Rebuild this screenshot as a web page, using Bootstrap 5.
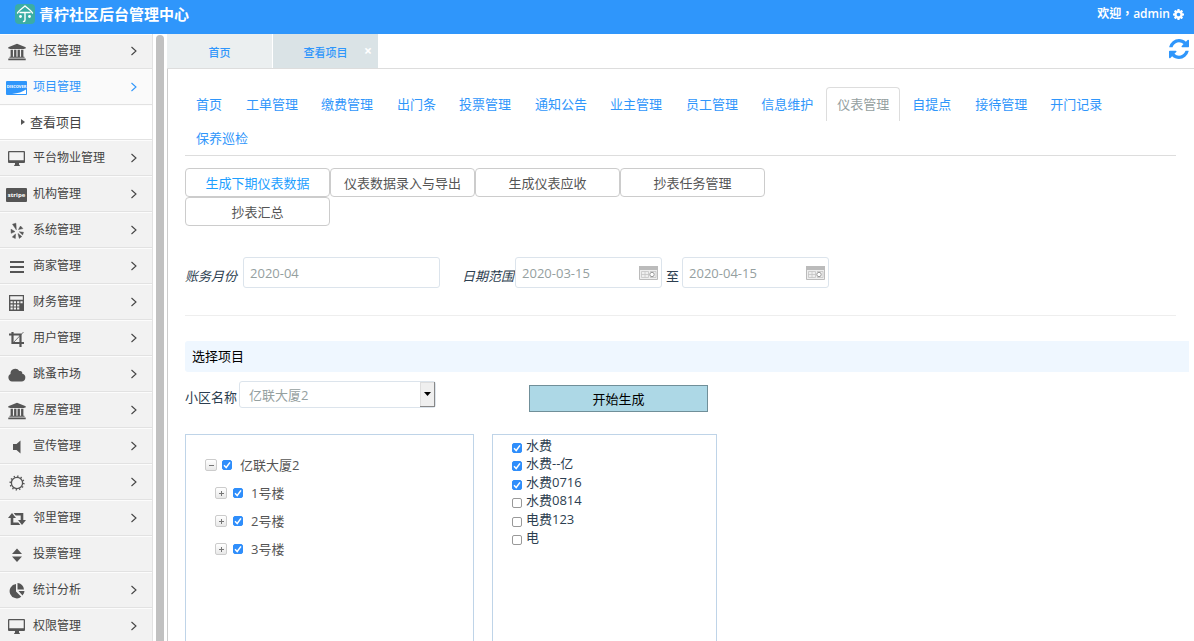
<!DOCTYPE html>
<html lang="zh-CN">
<head>
<meta charset="utf-8">
<meta name="viewport" content="width=device-width, initial-scale=1">
<title>青柠社区后台管理中心</title>
<link href="https://cdn.jsdelivr.net/npm/bootstrap@5.3.0/dist/css/bootstrap.min.css" rel="stylesheet">
<style>
  body { font: 13px/20px "Open Sans", "Noto Sans CJK SC", sans-serif; color: #2c3e50; background: #fff; }
  a { text-decoration: none; }
  .topbar { height: 34px; background: #2f96fb; color: #fff; padding: 0 10px 6px 15px; }
  .brand-name { font-size: 15px; font-weight: 600; color: #fff; }
  .user-link { font: 600 12px/20px "Open Sans", "Noto Sans CJK TC", sans-serif; color: #fff; gap: 3px; }
  .workspace { min-height: 0; }

  .side-menu { width: 153px; overflow-y: auto; scrollbar-width: none; border-right: 1px solid #e2e2e2; background: #f2f2f2; }
  .side-menu::-webkit-scrollbar, .page-body::-webkit-scrollbar { display: none; }
  .side-menu a { height: 36px; flex: none; padding: 0 14px 1px 6px; font-size: 12px; color: #444; fill: #555; background: #f2f2f2; border-top: 1px solid #fcfcfc; border-bottom: 1px solid #e2e2e2; }
  .side-menu a:first-child { height: 35px; }
  .side-menu a.current { color: #2f96fb; fill: #2f96fb; background: #fafafa; }
  .side-menu a.sub-item { height: 35px; padding-left: 20px; font-size: 13px; background: #fff; }
  .menu-icon { width: 22px; height: 18px; margin: 2px 5px 0 0; flex: none; }
  .menu-arrow { width: 8px; height: 10px; margin-left: auto; fill: none; stroke: currentColor; stroke-width: 1.1; }
  .menu-thumb { width: 8px; margin: 1px 3px 0; border-radius: 4px 4px 0 0; background: #c1c1c1; }

  .page-tabs { height: 35px; border-bottom: 1px solid #ddd; font-size: 11px; font-weight: 500; }
  .page-tab { width: 105px; height: 34px; padding-top: 4px; background: #ebeff0; color: #2f96fb; }
  .page-tab.current { width: 106px; background: #dae3e6; }
  .tab-close { right: 6px; top: 8px; width: 8px; height: 18px; padding: 0; border: 0; background: none; color: #fff; font: 700 14px/18px "Open Sans", sans-serif; }
  .refresh-btn { margin: 0 5px 4px auto; }
  .page-body { min-height: 0; padding: 18px 5px 0 17px; border-left: 1px solid #ccc; overflow-y: auto; scrollbar-width: none; }

  .section-tabs { margin-right: 13px; border-bottom: 1px solid #ddd; column-gap: 2px; }
  .section-tabs .nav-link { height: 34px; padding: 6px 10px; border: 1px solid transparent; border-bottom: 0; border-radius: 4px 4px 0 0; color: #2f96fb; margin: 0; }
  .section-tabs .nav-link:nth-child(even) { margin-right: -1px; }
  .section-tabs .nav-link.active { color: #95a0a0; border-color: #ddd; background: #fff; }

  .actions { max-width: 620px; margin-top: 12px; }
  .action-btn { width: 145px; height: 29px; padding: 0; border: 1px solid #ccc; border-radius: 4px; background: #fff; color: #555; }
  .action-btn.current { color: #1e9fff; }

  .filters { margin-top: 31px; padding-bottom: 27px; margin-right: 13px; border-bottom: 1px solid #eee; }
  .filters label, .filters .range-sep { padding-top: 7px; }
  .filters label { font-style: italic; }
  .filters .month-label { padding-right: 6px; }
  .filters .range-label { padding: 7px 1px 0 22px; }
  .filters .range-sep { padding-left: 4px; padding-right: 3px; }
  .field { height: 31px; padding: 0 6px; border: 1px solid #dce4ec; border-radius: 3px; color: #95a0a0; background: #fff; }
  .w-month { width: 197px; }
  .w-date { width: 147px; }
  .date-icon { right: 4px; top: 9px; width: 19px; height: 14px; pointer-events: none; }

  .section-title { margin: 25px 0 9px; padding: 5px 7px 6px; font-size: 13px; line-height: 20px; font-weight: 400; color: #000; background: #eff7ff; border-radius: 3px 0 0 3px; }
  .area-label { padding: 6px 2px 0 0; }
  .area-select { width: 197px; height: 27px; padding: 0 24px 0 9px; border: 1px solid #dce4ec; border-radius: 3px; appearance: none; background: #fff; color: #95a0a0; }
  .select-arrow { right: 1px; top: 1px; width: 15px; height: 25px; border: solid #888; border-width: 0 1px 1px 0; box-shadow: inset 1px 1px #ddd; background: #efefef; pointer-events: none; }
  .run-btn { width: 179px; height: 27px; margin: 4px 0 0 93px; padding: 0; border: 1px solid #708f99; background: #add8e6; color: #000; }

  .panes { margin-top: 22px; gap: 18px; }
  .pane { height: 300px; border: 1px solid #bfd4e8; }
  .tree-pane { width: 289px; padding: 16px 19px; color: #555; }
  .fee-pane { width: 225px; padding: 0 19px; }
  .tree-row { height: 28px; }
  .tree-row.child { padding-left: 10px; }
  .tree-toggle { width: 12px; height: 12px; margin-right: 5px; padding: 0; border: 1px solid #ccc; border-radius: 2px; background: linear-gradient(#fff, #e8e8e8); }
  .child .tree-toggle { margin-right: 6px; }
  .tree-toggle svg { display: block; width: 10px; height: 10px; stroke: #777; fill: none; }
  .tree-row label { padding-left: 8px; }
  .tick { appearance: none; flex: none; width: 10px; height: 10px; margin: 0; border: 1px solid #999; border-radius: 2px; background: #fff; }
  .tick:checked { border-color: #2f8efb; background: #2f8efb url("data:image/svg+xml,%3Csvg xmlns='http://www.w3.org/2000/svg' viewBox='0 0 8 8'%3E%3Cpath d='M1 4.3 3.2 6.5 7 1.4' fill='none' stroke='white' stroke-width='1.5'/%3E%3C/svg%3E") center/8px no-repeat; }
  .fee-row { height: 18px; }
  .fee-row:nth-child(even) { height: 19px; }
  .fee-row .tick { margin: 8px 4px 0 0; }
</style>
</head>
<body>
<svg class="d-none" xmlns="http://www.w3.org/2000/svg">
  <symbol id="i-bank" viewBox="-250 -94 2420 1980"><path d="M960 0l960 384v128h-128q0 26-20.5 45t-48.5 19h-1526q-28 0-48.5-19t-20.5-45h-128v-128zm-704 640h256v768h128v-768h256v768h128v-768h256v768h128v-768h256v768h59q28 0 48.500 19t20.500 45v64h-1664v-64q0-26 20.500-45t48.500-19h59v-768zm1595 960q28 0 48.500 19t20.500 45v128h-1920v-128q0-26 20.500-45t48.500-19h1782z"/></symbol>
  <symbol id="i-desktop" viewBox="0 0 22 18"><path fill-rule="evenodd" d="M3 1h15q1 0 1 1v10q0 1-1 1h-5v1.500q1 .5 1 1.500h-6q0-1 1-1.500v-1.500H3q-1 0-1-1V2q0-1 1-1zm.3 1.200v8h14.400v-8z"/></symbol>
  <symbol id="i-yelp" viewBox="0 0 22 18"><path d="M6.500 2.200l3.400-1 .4 6.600zM5 7.200l4 2.400-3.800 1.700zM9.500 12l-.2 4.500-3-1.500zM12 11.500l3.800 3-2.500 1.900zM13.300 9.800l4.200.5-.9 2.600zM12.500 7.500l2-3.500 2.400 2.600z" stroke="#555" stroke-width=".5" stroke-linejoin="round"/></symbol>
  <symbol id="i-bars" viewBox="0 0 22 18"><path d="M4 3h14v2H4zM4 8h14v2H4zM4 13h14v2H4z"/></symbol>
  <symbol id="i-calc" viewBox="0 0 22 18"><path fill-rule="evenodd" d="M3 1h15v16H3zm1.200 1.200v3.600h12.600V2.200zM4.500 7.200h2.200v2H4.500zm3.300 0H10v2H7.800zm3.300 0h2.200v2h-2.200zm3.300 0h2.200v2h-2.200zM4.500 10.400h2.200v2H4.500zm3.300 0H10v2H7.800zm3.300 0h2.200v2h-2.200zM4.500 13.600h2.200v2H4.500zm3.300 0H10v2H7.800zm3.300 0h2.200v2h-2.200z"/></symbol>
  <symbol id="i-crop" viewBox="0 0 22 18"><path d="M6.500 2v11H18M3 4.500h11.500V17" fill="none" stroke="#555" stroke-width="2.200"/><path d="M7 13 17.500 2" stroke="#555" stroke-width=".8"/></symbol>
  <symbol id="i-cloud" viewBox="0 0 22 18"><path d="M6 15.500A4 4 0 0 1 4.500 8 4.800 4.800 0 0 1 13.300 5q3.200-.5 3 2.800A3.900 3.900 0 0 1 15.500 15.500z"/></symbol>
  <symbol id="i-speaker" viewBox="0 0 22 18"><path d="M7 6h3.500L14.500 2.500v13L10.500 12H7z"/></symbol>
  <symbol id="i-sun" viewBox="0 0 22 18"><circle cx="11" cy="9" r="5.600" fill="none" stroke="#555" stroke-width="1.300"/><circle cx="11" cy="9" r="6.800" fill="none" stroke="#555" stroke-width="1.600" stroke-dasharray="1.300 2.260"/></symbol>
  <symbol id="i-retweet" viewBox="0 0 22 18"><path d="M2 8l4-5 4 5H7.300v4.500h5l2 2.500H4.700V8zM20 10l-4 5-4-5h2.700V5.500h-5L7.700 3h9.600v7z"/></symbol>
  <symbol id="i-sort" viewBox="0 0 22 18"><path d="M6 8l5-5.500L16 8zM6 10.500h10L11 16z"/></symbol>
  <symbol id="i-pie" viewBox="0 0 22 18"><path d="M10 2v7.500l5.300 5.300A7.200 7.200 0 1 1 10 2zM11.500 1A7 7 0 0 1 18 7.500h-6.500zM12.500 9h6a7 7 0 0 1-2 4.500z"/></symbol>
  <symbol id="i-discover" viewBox="0 0 22 18"><rect y="2" width="21" height="14" rx="1"/><path d="M20 10.500V15H6q9-1 14-4.500z" fill="#fff"/><text x="10.500" y="9" text-anchor="middle" font-size="4" font-weight="700" fill="#fff">DISCOVER</text></symbol>
  <symbol id="i-stripe" viewBox="0 0 22 18"><rect y="2" width="21" height="14" rx="1"/><text x="10.500" y="11" text-anchor="middle" font-size="6" font-weight="700" fill="#fff">stripe</text></symbol>
  <symbol id="i-chevron" viewBox="0 0 8 10"><path d="M1.500 1l4.500 4-4.500 4"/></symbol>
  <symbol id="i-calendar" viewBox="0 0 19 14"><path fill="#eee" stroke="#bbb" d="M.5.5h18v13H.5z"/><path fill="#bbb" d="M0 0h19v4H0z"/><path fill="none" stroke="#c4c4c4" stroke-width=".8" d="M2.500 5.500h7v6h-7zM2 8.500h8M6 5.500v6M11 5.500h6v6h-6"/><circle cx="13" cy="8.500" r="2.200" fill="#fff" stroke="#999"/></symbol>
</svg>

<div class="d-flex flex-column vh-100 overflow-hidden">
  <header class="topbar d-flex align-items-center justify-content-between flex-shrink-0">
    <a href="#" class="d-flex align-items-center gap-1">
      <svg width="20" height="20" viewBox="0 0 20 20" aria-hidden="true"><rect width="20" height="20" rx="4" fill="#3bada4"/><path d="M2.500 9Q3 7.500 10 2q7 5.500 7.500 7M5 8.500h10M10 8.500v7.500q0 1.500-1.500 1.500" fill="none" stroke="#fff" stroke-width="1.400" stroke-linecap="round"/><circle cx="5.500" cy="12.500" r="1.400" fill="#fff"/><circle cx="14.500" cy="12.500" r="1.400" fill="#fff"/></svg>
      <span class="brand-name">青柠社区后台管理中心</span>
    </a>
    <a href="#" class="user-link d-flex align-items-center"><span lang="zh-TW">欢迎，admin</span>
      <svg width="11" height="11" viewBox="128 128 1536 1536" fill="#fff" aria-hidden="true"><path d="M1152 896q0-106-75-181t-181-75-181 75-75 181 75 181 181 75 181-75 75-181zm512-109v222q0 12-8 23t-20 13l-185 28q-19 54-39 91 35 50 107 138 10 12 10 25t-9 23q-27 37-99 108t-94 71q-12 0-26-9l-138-108q-44 23-91 38-16 136-29 186-7 28-36 28h-222q-14 0-24.500-8.500t-11.500-21.500l-28-184q-49-16-90-37l-141 107q-10 9-25 9-14 0-25-11-126-114-165-168-7-10-7-23 0-12 8-23 15-21 51-66.500t54-70.500q-27-50-41-99l-183-27q-13-2-21-12.500t-8-23.500v-222q0-12 8-23t19-13l186-28q14-46 39-92-40-57-107-138-10-12-10-24 0-10 9-23 26-36 98.500-107.500t94.500-71.500q13 0 26 10l138 107q44-23 91-38 16-136 29-186 7-28 36-28h222q14 0 24.500 8.500t11.500 21.500l28 184q49 16 90 37l142-107q9-9 24-9 13 0 25 10 129 119 165 170 7 8 7 22 0 12-8 23-15 21-51 66.500t-54 70.500q26 50 41 98l183 28q13 2 21 12.500t8 23.500z"/></svg>
    </a>
  </header>

  <div class="workspace d-flex flex-grow-1">
    <nav class="side-menu d-flex flex-column flex-shrink-0" aria-label="主菜单">
      <a href="#" class="d-flex align-items-center"><svg class="menu-icon"><use href="#i-bank"/></svg>社区管理<svg class="menu-arrow"><use href="#i-chevron"/></svg></a>
      <a href="#" class="d-flex align-items-center current"><svg class="menu-icon"><use href="#i-discover"/></svg>项目管理<svg class="menu-arrow"><use href="#i-chevron"/></svg></a>
      <a href="#" class="d-flex align-items-center sub-item"><svg class="me-1" width="6" height="8" viewBox="0 0 6 8"><path d="M1 1l4 3-4 3z"/></svg>查看项目</a>
      <a href="#" class="d-flex align-items-center"><svg class="menu-icon"><use href="#i-desktop"/></svg>平台物业管理<svg class="menu-arrow"><use href="#i-chevron"/></svg></a>
      <a href="#" class="d-flex align-items-center"><svg class="menu-icon"><use href="#i-stripe"/></svg>机构管理<svg class="menu-arrow"><use href="#i-chevron"/></svg></a>
      <a href="#" class="d-flex align-items-center"><svg class="menu-icon"><use href="#i-yelp"/></svg>系统管理<svg class="menu-arrow"><use href="#i-chevron"/></svg></a>
      <a href="#" class="d-flex align-items-center"><svg class="menu-icon"><use href="#i-bars"/></svg>商家管理<svg class="menu-arrow"><use href="#i-chevron"/></svg></a>
      <a href="#" class="d-flex align-items-center"><svg class="menu-icon"><use href="#i-calc"/></svg>财务管理<svg class="menu-arrow"><use href="#i-chevron"/></svg></a>
      <a href="#" class="d-flex align-items-center"><svg class="menu-icon"><use href="#i-crop"/></svg>用户管理<svg class="menu-arrow"><use href="#i-chevron"/></svg></a>
      <a href="#" class="d-flex align-items-center"><svg class="menu-icon"><use href="#i-cloud"/></svg>跳蚤市场<svg class="menu-arrow"><use href="#i-chevron"/></svg></a>
      <a href="#" class="d-flex align-items-center"><svg class="menu-icon"><use href="#i-bank"/></svg>房屋管理<svg class="menu-arrow"><use href="#i-chevron"/></svg></a>
      <a href="#" class="d-flex align-items-center"><svg class="menu-icon"><use href="#i-speaker"/></svg>宣传管理<svg class="menu-arrow"><use href="#i-chevron"/></svg></a>
      <a href="#" class="d-flex align-items-center"><svg class="menu-icon"><use href="#i-sun"/></svg>热卖管理<svg class="menu-arrow"><use href="#i-chevron"/></svg></a>
      <a href="#" class="d-flex align-items-center"><svg class="menu-icon"><use href="#i-retweet"/></svg>邻里管理<svg class="menu-arrow"><use href="#i-chevron"/></svg></a>
      <a href="#" class="d-flex align-items-center"><svg class="menu-icon"><use href="#i-sort"/></svg>投票管理</a>
      <a href="#" class="d-flex align-items-center"><svg class="menu-icon"><use href="#i-pie"/></svg>统计分析<svg class="menu-arrow"><use href="#i-chevron"/></svg></a>
      <a href="#" class="d-flex align-items-center"><svg class="menu-icon"><use href="#i-desktop"/></svg>权限管理<svg class="menu-arrow"><use href="#i-chevron"/></svg></a>
    </nav>
    <div class="menu-thumb flex-shrink-0"></div>

    <main class="d-flex flex-column flex-grow-1 overflow-hidden">
      <div class="page-tabs d-flex flex-shrink-0">
        <a href="#" class="page-tab d-flex align-items-center justify-content-center">首页</a>
        <div class="page-tab current d-flex align-items-center justify-content-center position-relative border-start border-white"><a href="#" class="text-reset">查看项目</a><button type="button" class="tab-close position-absolute" aria-label="关闭">×</button></div>
        <button type="button" class="btn p-0 border-0 lh-1 refresh-btn" aria-label="刷新"><svg width="20" height="20" viewBox="128 128 1536 1536" fill="#2f96fb"><path d="M1639 1056q0 5-1 7-64 268-268 434.500t-478 166.500q-146 0-282.500-55t-243.500-157l-129 129q-19 19-45 19t-45-19-19-45v-448q0-26 19-45t45-19h448q26 0 45 19t19 45-19 45l-137 137q71 66 161 102t187 36q134 0 250-65t186-179q11-17 53-117 8-23 30-23h192q13 0 22.500 9.500t9.500 22.500zm25-800v448q0 26-19 45t-45 19h-448q-26 0-45-19t-19-45 19-45l138-138q-148-137-349-137-134 0-250 65t-186 179q-11 17-53 117-8 23-30 23h-199q-13 0-22.500-9.500t-9.500-22.500v-7q65-268 270-434.500t480-166.500q146 0 284 55.500t245 156.500l130-129q19-19 45-19t45 19 19 45z"/></svg></button>
      </div>

      <div class="page-body flex-grow-1">
        <nav class="nav section-tabs">
          <a class="nav-link" href="#">首页</a>
          <a class="nav-link" href="#">工单管理</a>
          <a class="nav-link" href="#">缴费管理</a>
          <a class="nav-link" href="#">出门条</a>
          <a class="nav-link" href="#">投票管理</a>
          <a class="nav-link" href="#">通知公告</a>
          <a class="nav-link" href="#">业主管理</a>
          <a class="nav-link" href="#">员工管理</a>
          <a class="nav-link" href="#">信息维护</a>
          <a class="nav-link active" href="#" aria-current="page">仪表管理</a>
          <a class="nav-link" href="#">自提点</a>
          <a class="nav-link" href="#">接待管理</a>
          <a class="nav-link" href="#">开门记录</a>
          <a class="nav-link" href="#">保养巡检</a>
        </nav>

        <div class="actions d-flex flex-wrap">
          <button type="button" class="action-btn current">生成下期仪表数据</button>
          <button type="button" class="action-btn">仪表数据录入与导出</button>
          <button type="button" class="action-btn">生成仪表应收</button>
          <button type="button" class="action-btn">抄表任务管理</button>
          <button type="button" class="action-btn">抄表汇总</button>
        </div>

        <form class="filters d-flex align-items-center">
          <label for="month" class="month-label">账务月份</label>
          <input id="month" class="field w-month" type="text" value="2020-04">
          <label for="from" class="range-label">日期范围</label>
          <div class="position-relative"><input id="from" class="field w-date" type="text" value="2020-03-15"><svg class="date-icon position-absolute"><use href="#i-calendar"/></svg></div>
          <span class="range-sep">至</span>
          <div class="position-relative"><input class="field w-date" type="text" value="2020-04-15" aria-label="结束日期"><svg class="date-icon position-absolute"><use href="#i-calendar"/></svg></div>
        </form>

        <h2 class="section-title">选择项目</h2>
        <div class="d-flex align-items-start">
          <label for="area" class="area-label">小区名称</label>
          <div class="position-relative">
            <select id="area" class="area-select"><option>亿联大厦2</option></select>
            <span class="select-arrow position-absolute d-flex align-items-center justify-content-center"><svg width="7" height="4" viewBox="0 0 7 4"><path d="M0 0h7L3.500 4z"/></svg></span>
          </div>
          <button type="button" class="run-btn">开始生成</button>
        </div>

        <div class="panes d-flex">
          <div class="pane tree-pane">
            <div class="tree-row d-flex align-items-center"><button type="button" class="tree-toggle" aria-label="收起"><svg viewBox="0 0 10 10"><path d="M3 5.500h5"/></svg></button><input id="t0" class="tick" type="checkbox" checked><label for="t0">亿联大厦2</label></div>
            <div class="tree-row child d-flex align-items-center"><button type="button" class="tree-toggle" aria-label="展开"><svg viewBox="0 0 10 10"><path d="M3 5.500h5M5.500 3v5"/></svg></button><input id="t1" class="tick" type="checkbox" checked><label for="t1">1号楼</label></div>
            <div class="tree-row child d-flex align-items-center"><button type="button" class="tree-toggle" aria-label="展开"><svg viewBox="0 0 10 10"><path d="M3 5.500h5M5.500 3v5"/></svg></button><input id="t2" class="tick" type="checkbox" checked><label for="t2">2号楼</label></div>
            <div class="tree-row child d-flex align-items-center"><button type="button" class="tree-toggle" aria-label="展开"><svg viewBox="0 0 10 10"><path d="M3 5.500h5M5.500 3v5"/></svg></button><input id="t3" class="tick" type="checkbox" checked><label for="t3">3号楼</label></div>
          </div>
          <div class="pane fee-pane">
            <div class="fee-row d-flex"><input id="f1" class="tick" type="checkbox" checked><label for="f1">水费</label></div>
            <div class="fee-row d-flex"><input id="f2" class="tick" type="checkbox" checked><label for="f2">水费--亿</label></div>
            <div class="fee-row d-flex"><input id="f3" class="tick" type="checkbox" checked><label for="f3">水费0716</label></div>
            <div class="fee-row d-flex"><input id="f4" class="tick" type="checkbox"><label for="f4">水费0814</label></div>
            <div class="fee-row d-flex"><input id="f5" class="tick" type="checkbox"><label for="f5">电费123</label></div>
            <div class="fee-row d-flex"><input id="f6" class="tick" type="checkbox"><label for="f6">电</label></div>
          </div>
        </div>
      </div>
    </main>
  </div>
</div>
<script src="https://cdn.jsdelivr.net/npm/bootstrap@5.3.0/dist/js/bootstrap.bundle.min.js"></script>
</body>
</html>
